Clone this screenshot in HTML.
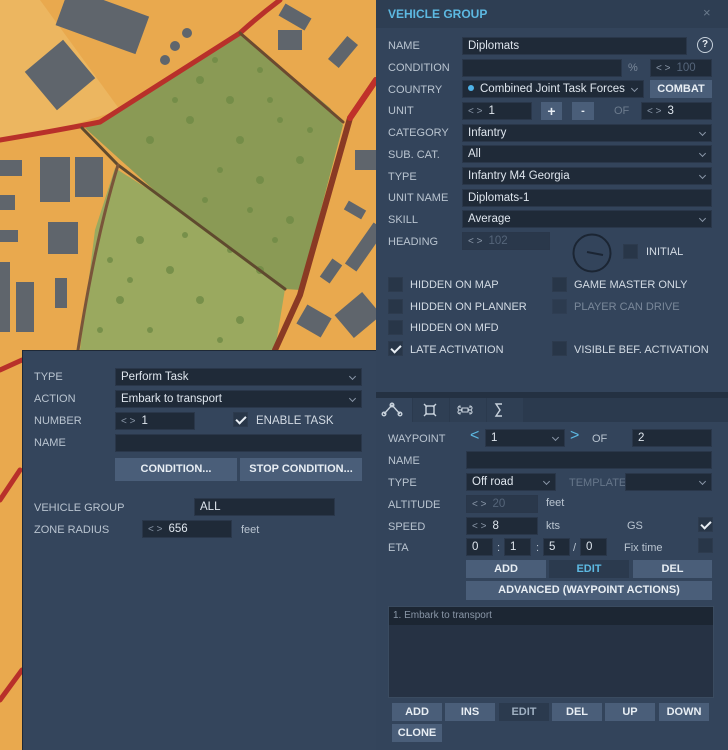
<!DOCTYPE html>
<html><head><meta charset="utf-8"><style>
*{box-sizing:border-box;margin:0;padding:0}
body{width:728px;height:750px;overflow:hidden;position:relative;background:#e9a94e;font-family:"Liberation Sans","DejaVu Sans",sans-serif;font-size:11px;color:#c9d2dc}
.a{position:absolute}
.p{position:absolute;background:#33445b}
.l{position:absolute;color:#b9c4d0;font-size:11px;line-height:14px}
.i{position:absolute;background:#1f2a38;border:1px solid #2a374a;color:#dfe6ee;font-size:11.5px;line-height:16px;padding-left:5px;height:18px;white-space:nowrap;overflow:hidden}
.dim{color:#55657a}
.dd:after{content:"";position:absolute;right:6px;top:5px;width:4px;height:4px;border-right:1px solid #8a97a8;border-bottom:1px solid #8a97a8;transform:rotate(45deg)}
.sp{color:#8a97a8;margin-right:6px;font-size:10px}
.b{position:absolute;background:#4a5e79;color:#e8eef4;font-weight:bold;font-size:11px;text-align:center;line-height:18px;height:18px}
.bd{background:#2b3a4e;color:#9fb0c2}
.cb{position:absolute;width:15px;height:15px;background:#283648;border:1px solid #2d3b4e}
.ck:after{content:"";position:absolute;left:4px;top:1px;width:4px;height:8px;border-right:2px solid #e8eef4;border-bottom:2px solid #e8eef4;transform:rotate(45deg)}
.t{position:absolute;color:#d3dbe4;font-size:11px;line-height:14px}
</style></head><body>
<svg class="a" style="left:0;top:0" width="376" height="750" viewBox="0 0 376 750">
<rect width="376" height="750" fill="#e9a94e"/>
<polygon points="0,0 40,0 120,110 40,135 0,140" fill="#ecb660"/>
<g fill="#5f656c">
<rect x="60" y="0" width="85" height="40" transform="rotate(20 100 20)"/>
<rect x="35" y="50" width="50" height="50" transform="rotate(-40 60 75)"/>
<rect x="0" y="160" width="22" height="16"/><rect x="40" y="157" width="30" height="45"/><rect x="75" y="157" width="28" height="40"/>
<rect x="0" y="195" width="15" height="15"/><rect x="0" y="230" width="18" height="12"/><rect x="48" y="222" width="30" height="32"/>
<rect x="0" y="262" width="10" height="70"/><rect x="16" y="282" width="18" height="50"/><rect x="55" y="278" width="12" height="30"/>
<rect x="280" y="10" width="30" height="14" transform="rotate(30 295 17)"/><rect x="278" y="30" width="24" height="20"/><rect x="328" y="45" width="30" height="14" transform="rotate(-50 343 52)"/>
<rect x="340" y="240" width="50" height="14" transform="rotate(-55 365 247)"/><rect x="325" y="260" width="12" height="22" transform="rotate(35 331 271)"/>
<rect x="300" y="310" width="28" height="22" transform="rotate(30 314 321)"/><rect x="340" y="300" width="36" height="30" transform="rotate(-40 358 315)"/>
<circle cx="187" cy="33" r="5"/><circle cx="175" cy="46" r="5"/><circle cx="165" cy="60" r="5"/>
<rect x="355" y="150" width="21" height="20"/><rect x="345" y="205" width="20" height="10" transform="rotate(30 355 210)"/>
</g>
<polygon points="240,33 330,108 343,125 300,290 285,289 165,200 85,128 115,112" fill="#8a9a55"/>
<polygon points="115,168 165,200 285,289 275,350 80,350 95,230" fill="#9aa95f"/>
<g fill="#6f8a45" opacity="0.8">
<circle cx="200" cy="80" r="4"/><circle cx="230" cy="100" r="4"/><circle cx="260" cy="70" r="3"/><circle cx="190" cy="120" r="4"/><circle cx="240" cy="140" r="4"/><circle cx="280" cy="120" r="3"/><circle cx="300" cy="160" r="4"/><circle cx="260" cy="180" r="4"/><circle cx="220" cy="170" r="3"/><circle cx="150" cy="140" r="4"/><circle cx="290" cy="220" r="4"/><circle cx="250" cy="210" r="3"/><circle cx="140" cy="240" r="4"/><circle cx="170" cy="270" r="4"/><circle cx="120" cy="300" r="4"/><circle cx="200" cy="300" r="4"/><circle cx="240" cy="320" r="4"/><circle cx="150" cy="330" r="3"/><circle cx="260" cy="270" r="4"/><circle cx="110" cy="260" r="3"/><circle cx="230" cy="250" r="3"/>
<circle cx="215" cy="60" r="3"/><circle cx="175" cy="100" r="3"/><circle cx="270" cy="100" r="3"/><circle cx="310" cy="130" r="3"/><circle cx="205" cy="200" r="3"/><circle cx="275" cy="240" r="3"/><circle cx="185" cy="235" r="3"/><circle cx="130" cy="280" r="3"/><circle cx="220" cy="340" r="3"/><circle cx="100" cy="330" r="3"/>
</g>
<g fill="none" stroke-linecap="round">
<path d="M0,140 Q60,130 100,122 L240,33 Q260,15 280,0" stroke="#b8302a" stroke-width="5"/>
<path d="M376,80 L350,118 L300,295 L275,350" stroke="#8a3a24" stroke-width="6"/>
<path d="M376,80 L350,118" stroke="#c0302a" stroke-width="6"/>
<path d="M240,33 L343,122" stroke="#6b4a30" stroke-width="3"/>
<path d="M82,128 L118,165 L285,289" stroke="#5f4a2e" stroke-width="3"/>
<path d="M118,165 Q95,240 78,350" stroke="#7a553a" stroke-width="3"/>
<path d="M0,370 L22,360 M0,500 L20,470 M0,700 L22,670" stroke="#b8302a" stroke-width="5"/>
</g>
</svg>

<div class="p" style="left:22px;top:350px;width:354px;height:400px;background:#34455c;border-left:1px solid #1e2836;border-top:1px solid #1e2836"></div>
<div class="l" style="left:34px;top:370px">TYPE</div><div class="i dd" style="left:115px;top:368px;width:247px">Perform Task</div>
<div class="l" style="left:34px;top:392px">ACTION</div><div class="i dd" style="left:115px;top:390px;width:247px">Embark to transport</div>
<div class="l" style="left:34px;top:414px">NUMBER</div><div class="i" style="left:115px;top:412px;width:80px"><span class="sp">&lt; &gt;</span>1</div>
<div class="cb ck" style="left:233px;top:412px"></div><div class="t" style="left:256px;top:414px;font-size:11.5px">ENABLE TASK</div>
<div class="l" style="left:34px;top:436px">NAME</div><div class="i" style="left:115px;top:434px;width:247px"></div>
<div class="b" style="left:115px;top:458px;width:122px;height:23px;line-height:23px">CONDITION...</div>
<div class="b" style="left:240px;top:458px;width:122px;height:23px;line-height:23px">STOP CONDITION...</div>
<div class="l" style="left:34px;top:501px">VEHICLE GROUP</div><div class="i" style="left:194px;top:498px;width:141px">ALL</div>
<div class="l" style="left:34px;top:523px">ZONE RADIUS</div><div class="i" style="left:142px;top:520px;width:90px"><span class="sp">&lt; &gt;</span>656</div>
<div class="l" style="left:241px;top:523px">feet</div>

<div class="p" style="left:376px;top:0;width:352px;height:750px"></div>
<div class="a" style="left:376px;top:0;width:352px;height:28px;background:#2e3e53"></div>
<div class="a" style="left:388px;top:7px;color:#5db9e2;font-weight:bold;font-size:12px">VEHICLE GROUP</div>
<div class="a" style="left:703px;top:5px;color:#6a7a8c;font-size:13px">×</div>
<div class="l" style="left:388px;top:39px">NAME</div><div class="i" style="left:462px;top:37px;width:225px">Diplomats</div>
<div class="a" style="left:697px;top:37px;width:16px;height:16px;border-radius:50%;border:1.5px solid #c8d2dc;color:#e8eef4;font-weight:bold;font-size:10px;text-align:center;line-height:13px">?</div>
<div class="l" style="left:388px;top:61px">CONDITION</div><div class="i" style="left:462px;top:59px;width:160px"></div>
<div class="l dim" style="left:628px;top:61px;color:#7a889a">%</div><div class="i dim" style="left:650px;top:59px;width:62px"><span class="sp dim">&lt; &gt;</span>100</div>
<div class="l" style="left:388px;top:83px">COUNTRY</div><div class="i dd" style="left:462px;top:80px;width:182px"><span style="display:inline-block;width:6px;height:6px;border-radius:50%;background:#4fb3e8;margin-right:6px;vertical-align:1px"></span>Combined Joint Task Forces</div>
<div class="b" style="left:650px;top:80px;width:62px;height:18px">COMBAT</div>
<div class="l" style="left:388px;top:104px">UNIT</div><div class="i" style="left:462px;top:102px;width:70px"><span class="sp">&lt; &gt;</span>1</div>
<div class="b" style="left:541px;top:102px;width:21px;font-size:14px">+</div><div class="b" style="left:572px;top:102px;width:22px">-</div>
<div class="l" style="left:614px;top:104px;color:#6c7b8d">OF</div><div class="i" style="left:641px;top:102px;width:71px"><span class="sp">&lt; &gt;</span>3</div>
<div class="l" style="left:388px;top:126px">CATEGORY</div><div class="i dd" style="left:462px;top:124px;width:250px">Infantry</div>
<div class="l" style="left:388px;top:148px">SUB. CAT.</div><div class="i dd" style="left:462px;top:145px;width:250px">All</div>
<div class="l" style="left:388px;top:170px">TYPE</div><div class="i dd" style="left:462px;top:167px;width:250px">Infantry M4 Georgia</div>
<div class="l" style="left:388px;top:191px">UNIT NAME</div><div class="i" style="left:462px;top:189px;width:250px">Diplomats-1</div>
<div class="l" style="left:388px;top:213px">SKILL</div><div class="i dd" style="left:462px;top:210px;width:250px">Average</div>
<div class="l" style="left:388px;top:235px">HEADING</div><div class="i dim" style="left:462px;top:232px;width:88px;background:#2a384b"><span class="sp dim">&lt; &gt;</span>102</div>
<svg class="a" style="left:570px;top:231px" width="44" height="44"><circle cx="22" cy="22" r="18.5" fill="none" stroke="#1b2533" stroke-width="2"/><line x1="17" y1="21" x2="33" y2="24" stroke="#1b2533" stroke-width="2"/></svg>
<div class="cb" style="left:623px;top:244px"></div><div class="t" style="left:646px;top:245px">INITIAL</div>
<div class="cb" style="left:388px;top:277px"></div><div class="t" style="left:410px;top:278px">HIDDEN ON MAP</div>
<div class="cb" style="left:552px;top:277px"></div><div class="t" style="left:574px;top:278px">GAME MASTER ONLY</div>
<div class="cb" style="left:388px;top:299px"></div><div class="t" style="left:410px;top:300px">HIDDEN ON PLANNER</div>
<div class="cb" style="left:552px;top:299px;opacity:.6"></div><div class="t" style="left:574px;top:300px;color:#7a889a">PLAYER CAN DRIVE</div>
<div class="cb" style="left:388px;top:320px"></div><div class="t" style="left:410px;top:321px">HIDDEN ON MFD</div>
<div class="cb ck" style="left:388px;top:341px"></div><div class="t" style="left:410px;top:343px">LATE ACTIVATION</div>
<div class="cb" style="left:552px;top:341px"></div><div class="t" style="left:574px;top:343px">VISIBLE BEF. ACTIVATION</div>
<div class="a" style="left:376px;top:392px;width:352px;height:6px;background:#243142"></div>
<div class="a" style="left:376px;top:398px;width:352px;height:24px;background:#2b3a4e"></div>
<div class="a" style="left:376px;top:398px;width:36px;height:24px;background:#33445b"></div>
<div class="a" style="left:413px;top:398px;width:36px;height:24px;background:#2f3f54"></div>
<div class="a" style="left:450px;top:398px;width:36px;height:24px;background:#2f3f54"></div>
<div class="a" style="left:487px;top:398px;width:36px;height:24px;background:#2f3f54"></div>
<svg class="a" style="left:376px;top:398px" width="150" height="24" fill="none" stroke="#c8d2dc" stroke-width="1.4">
<path d="M8,16 L16,7 L24,16"/><circle cx="8" cy="16" r="1.8"/><circle cx="16" cy="7" r="1.8"/><circle cx="24" cy="16" r="1.8"/>
<rect x="50" y="8" width="8" height="8"/><path d="M48,6 L51,9 M60,6 L57,9 M48,18 L51,15 M60,18 L57,15"/>
<path d="M86,10 h6 v4 h-6 z M86,10 a2,2 0 1 1 -2,-2 v2 M92,10 a2,2 0 1 0 2,-2 v2 M86,14 a2,2 0 1 0 -2,2 v-2 M92,14 a2,2 0 1 1 2,2 v-2" stroke-width="1.1"/>
<path d="M126,6 h-6 l4,6 l-4,6 h6"/>
</svg>
<div class="l" style="left:388px;top:432px">WAYPOINT</div>
<div class="a" style="left:470px;top:427px;color:#5db9e2;font-size:16px">&lt;</div>
<div class="i dd" style="left:485px;top:429px;width:80px">1</div>
<div class="a" style="left:570px;top:427px;color:#5db9e2;font-size:16px">&gt;</div>
<div class="l" style="left:592px;top:432px">OF</div><div class="i" style="left:632px;top:429px;width:80px">2</div>
<div class="l" style="left:388px;top:454px">NAME</div><div class="i" style="left:466px;top:451px;width:246px"></div>
<div class="l" style="left:388px;top:476px">TYPE</div><div class="i dd" style="left:466px;top:473px;width:90px">Off road</div>
<div class="l" style="left:569px;top:476px;color:#66768a">TEMPLATE</div><div class="i dd" style="left:625px;top:473px;width:87px"></div>
<div class="l" style="left:388px;top:498px">ALTITUDE</div><div class="i dim" style="left:466px;top:495px;width:72px;background:#2a384b"><span class="sp dim">&lt; &gt;</span>20</div>
<div class="l" style="left:546px;top:496px">feet</div>
<div class="l" style="left:388px;top:520px">SPEED</div><div class="i" style="left:466px;top:517px;width:72px"><span class="sp">&lt; &gt;</span>8</div>
<div class="l" style="left:546px;top:519px">kts</div><div class="l" style="left:627px;top:519px">GS</div>
<div class="cb ck" style="left:698px;top:517px"></div>
<div class="l" style="left:388px;top:541px">ETA</div>
<div class="i" style="left:466px;top:538px;width:27px">0</div><div class="l" style="left:497px;top:541px">:</div>
<div class="i" style="left:504px;top:538px;width:27px">1</div><div class="l" style="left:536px;top:541px">:</div>
<div class="i" style="left:543px;top:538px;width:27px">5</div><div class="l" style="left:573px;top:541px">/</div>
<div class="i" style="left:580px;top:538px;width:27px">0</div>
<div class="l" style="left:624px;top:541px">Fix time</div><div class="cb" style="left:698px;top:538px"></div>
<div class="b" style="left:466px;top:560px;width:80px">ADD</div>
<div class="b bd" style="left:549px;top:560px;width:80px;color:#5db9e2">EDIT</div>
<div class="b" style="left:633px;top:560px;width:79px">DEL</div>
<div class="b" style="left:466px;top:581px;width:246px;height:19px">ADVANCED (WAYPOINT ACTIONS)</div>
<div class="a" style="left:388px;top:606px;width:326px;height:92px;background:#263244;border:1px solid #3a4b60"></div>
<div class="a" style="left:389px;top:607px;width:324px;height:18px;background:#1c2633;color:#8a97a8;font-size:10px;line-height:18px;padding-left:4px">1. Embark to transport</div>
<div class="b" style="left:392px;top:703px;width:50px">ADD</div>
<div class="b" style="left:445px;top:703px;width:50px">INS</div>
<div class="b bd" style="left:499px;top:703px;width:50px">EDIT</div>
<div class="b" style="left:552px;top:703px;width:50px">DEL</div>
<div class="b" style="left:605px;top:703px;width:50px">UP</div>
<div class="b" style="left:659px;top:703px;width:50px">DOWN</div>
<div class="b" style="left:392px;top:724px;width:50px">CLONE</div>
</body></html>
